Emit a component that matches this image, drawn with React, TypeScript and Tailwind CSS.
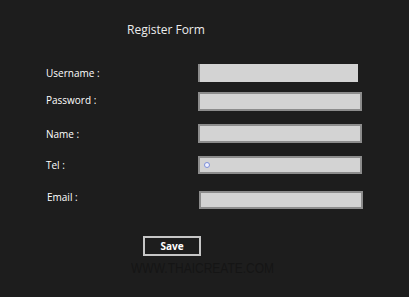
import * as React from "react";

const fields = [
  { label: "Username :", top: "mt-[25px]", h: "h-[18px]", w: "w-[160px]", box: "border-l-2 border-[#8c8c8c]", labelPad: "pl-[46px]", inputPad: "", dot: false },
  { label: "Password :", top: "mt-[10px]", h: "h-[19px]", w: "w-[164px]", box: "border-2 border-[#8c8c8c]", labelPad: "pl-[46px] -mt-[4px]", inputPad: "", dot: false },
  { label: "Name :", top: "mt-[13px]", h: "h-[19px]", w: "w-[164px]", box: "border-2 border-[#8c8c8c]", labelPad: "pl-[46px]", inputPad: "", dot: false },
  { label: "Tel :", top: "mt-[13px]", h: "h-[18px]", w: "w-[164px]", box: "border-2 border-[#8c8c8c]", labelPad: "pl-[46px]", inputPad: "", dot: true },
  { label: "Email :", top: "mt-[17px]", h: "h-[18px]", w: "w-[164px]", box: "border-2 border-[#8c8c8c]", labelPad: "pl-[47px] -mt-[6px]", inputPad: "ml-[1px]", dot: false },
];

export default function App() {
  return (
    <div className="flex h-[297px] w-[409px] flex-col overflow-hidden bg-[#1d1d1d] font-['Open_Sans','Noto_Sans',sans-serif] text-white">
      <div className="mt-[21px] pl-[127px] text-[12px] leading-[18px] text-[#ececec]">Register Form</div>
      {fields.map((f) => (
        <div key={f.label} className={`flex items-center ${f.top}`}>
          <div className={`w-[198px] text-[10px] font-medium leading-[14px] ${f.labelPad}`}>{f.label}</div>
          <div className={`${f.inputPad} flex ${f.h} ${f.w} items-center bg-[#d3d3d3] ${f.box}`}>
            {f.dot ? (
              <span className="ml-[4px] h-[6px] w-[6px] rounded-full border border-[#7d8fd8] bg-[#eef0ff]" />
            ) : null}
          </div>
        </div>
      ))}
      <div className="mt-[27px] pl-[143px]">
        <button
          type="button"
          className="flex h-[20px] w-[58px] items-center justify-center border-2 border-[#c6c6c6] text-[10px] font-bold text-white"
        >
          Save
        </button>
      </div>
      <div className="mt-[4px] w-[409px] pl-[131px]">
        <div className="w-[181px] origin-left scale-x-[0.8] font-['Liberation_Sans',sans-serif] text-[15px] leading-[15px] text-[#151515]">
          WWW.THAICREATE.COM
        </div>
      </div>
    </div>
  );
}
